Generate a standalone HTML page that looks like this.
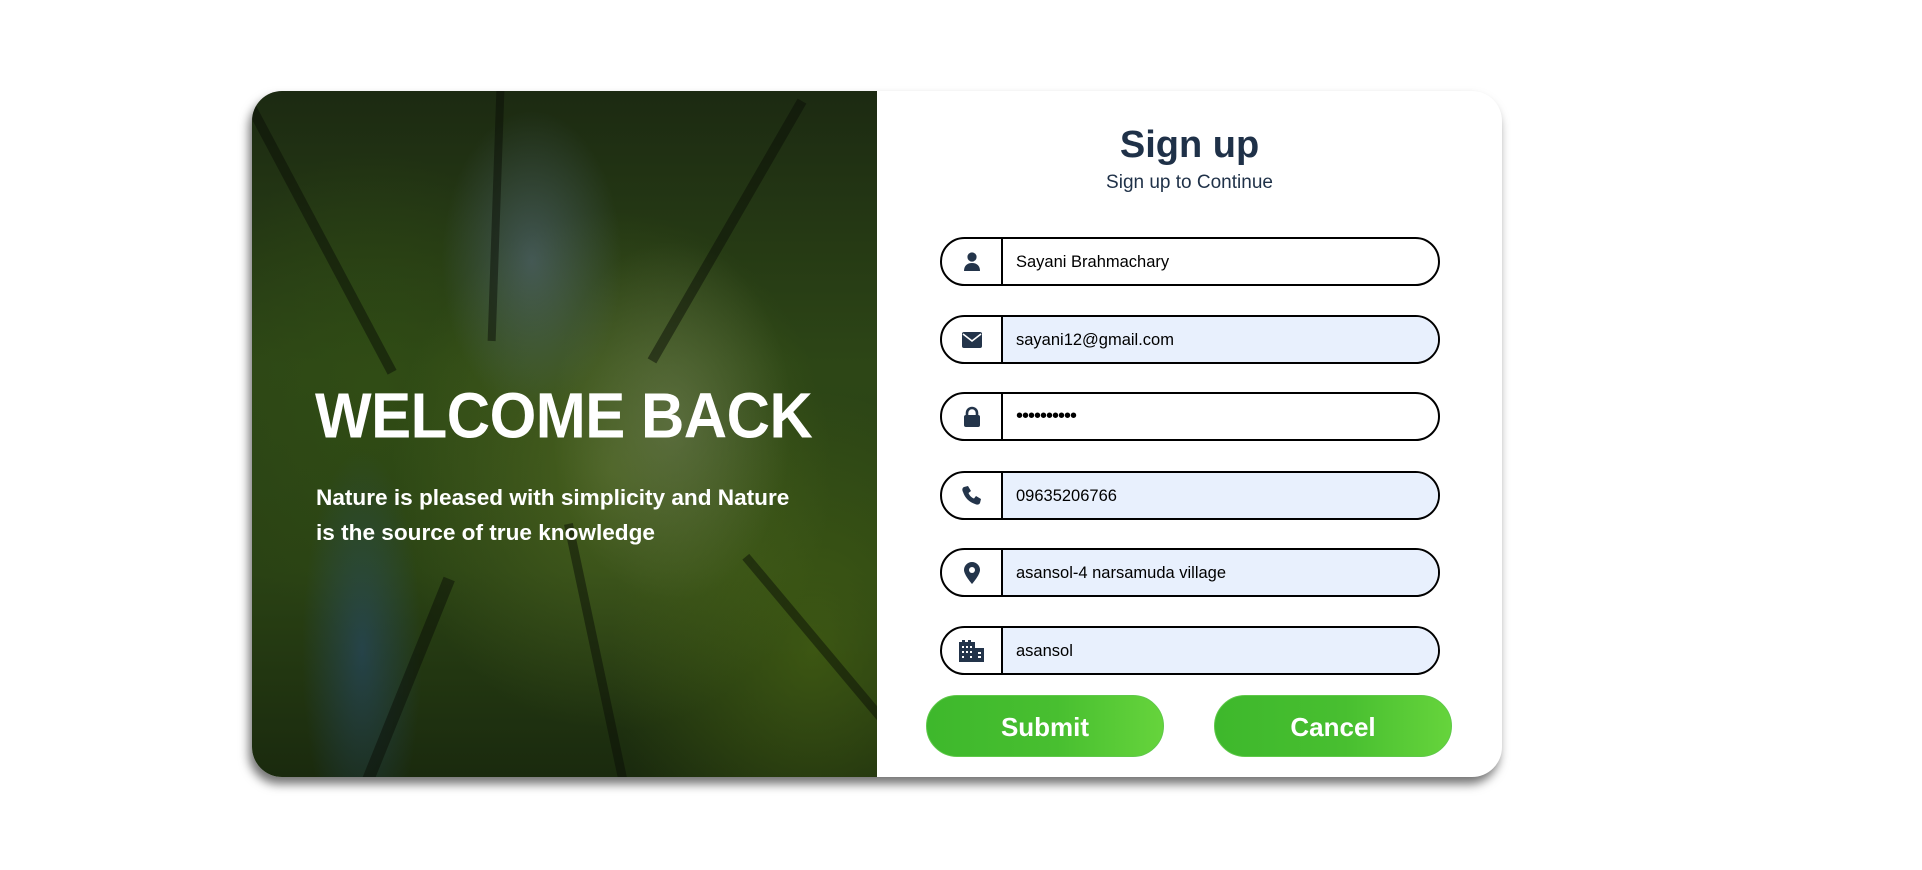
<!DOCTYPE html>
<html><head><meta charset="utf-8"><style>
*{margin:0;padding:0;box-sizing:border-box}
body{width:1922px;height:870px;background:#fff;font-family:"Liberation Sans",sans-serif;position:relative;overflow:hidden}
.card{position:absolute;left:252px;top:91px;width:1250px;height:686px;border-radius:30px;box-shadow:-3px 7px 10px rgba(0,0,0,.55);background:#fff}
.left{position:absolute;left:0;top:0;width:625px;height:686px;border-radius:30px 0 0 30px;overflow:hidden;
background:
radial-gradient(ellipse 60px 200px at 110px 560px,rgba(40,80,140,.45),transparent),
radial-gradient(ellipse 90px 150px at 280px 170px,rgba(100,120,160,.45),transparent),
radial-gradient(ellipse 120px 180px at 420px 330px,rgba(130,140,110,.4),transparent),
radial-gradient(ellipse 220px 260px at 360px 380px,rgba(100,125,40,.5),transparent),
radial-gradient(ellipse 200px 260px at 560px 560px,rgba(80,110,20,.55),transparent),
radial-gradient(ellipse 180px 240px at 120px 300px,rgba(50,80,20,.6),transparent),
linear-gradient(180deg,#1c2a12 0%,#2d4616 40%,#2a4214 70%,#1a2a0e 100%)}
.trunk{position:absolute;background:rgba(10,14,6,.5);width:10px}
.w{position:absolute;left:63px;top:290px;color:#fff;font-weight:bold;font-size:60px;letter-spacing:-0.5px;transform:scaleY(1.07)}
.p{position:absolute;left:64px;top:389px;color:#fff;font-weight:bold;font-size:22.6px;line-height:35px;white-space:nowrap}
.t{position:absolute;left:625px;width:625px;text-align:center;color:#1f3148}
.field{position:absolute;left:688px;width:500px;height:49px;border:2px solid #000;border-radius:25px;overflow:hidden;background:#fff}
.field .ic{position:absolute;left:0;top:0;width:61px;height:45px;border-right:2px solid #000;display:flex;align-items:center;justify-content:center}
.field .v{position:absolute;left:61px;right:0;top:0;height:45px;padding-left:13px;line-height:47px;font-size:16.5px;color:#000}
.blue .v{background:#e8f0fd}
.btn{position:absolute;top:604px;width:238px;height:62px;border-radius:31px;background:linear-gradient(90deg,#3eb82c 0%,#48bf30 55%,#66d43c 100%);border:1px solid #5fc94a;color:#fff;font-weight:bold;font-size:26px;text-align:center;line-height:62px}
</style></head><body>
<div class="card">
 <div class="left">
  <div class="trunk" style="left:60px;top:-20px;height:320px;transform:rotate(-28deg)"></div>
  <div class="trunk" style="left:240px;top:0;height:250px;width:8px;transform:rotate(2deg)"></div>
  <div class="trunk" style="left:470px;top:-10px;height:300px;transform:rotate(30deg)"></div>
  <div class="trunk" style="left:150px;top:480px;height:220px;width:12px;transform:rotate(22deg)"></div>
  <div class="trunk" style="left:340px;top:430px;height:270px;width:9px;transform:rotate(-12deg)"></div>
  <div class="trunk" style="left:560px;top:440px;height:220px;width:9px;transform:rotate(-40deg)"></div>
  <div class="w">WELCOME BACK</div>
  <div class="p">Nature is pleased with simplicity and Nature<br>is the source of true knowledge</div>
 </div>
 <div class="t" style="top:33px;font-size:38px;font-weight:bold">Sign up</div>
 <div class="t" style="top:81px;font-size:19px">Sign up to Continue</div>

 <div class="field" style="top:146px"><div class="ic"><svg width="18" height="20" viewBox="0 0 18 20"><circle cx="9" cy="5" r="4.6" fill="#23344a"/><path d="M1 19c0-5 3-8 8-8s8 3 8 8z" fill="#23344a"/></svg></div><div class="v">Sayani Brahmachary</div></div>
 <div class="field blue" style="top:224px"><div class="ic"><svg width="20" height="16" viewBox="0 0 20 16"><rect x="0" y="0" width="20" height="16" rx="2" fill="#23344a"/><path d="M1 2l9 7 9-7" stroke="#fff" stroke-width="1.6" fill="none"/></svg></div><div class="v">sayani12@gmail.com</div></div>
 <div class="field" style="top:301px"><div class="ic"><svg width="18" height="22" viewBox="0 0 18 22"><path d="M4 10V7a5 5 0 0110 0v3" stroke="#23344a" stroke-width="2.6" fill="none"/><rect x="1" y="9" width="16" height="12" rx="2" fill="#23344a"/></svg></div><div class="v" style="font-size:20px;letter-spacing:-1px;line-height:44px">••••••••••</div></div>
 <div class="field blue" style="top:380px"><div class="ic"><svg width="20" height="20" viewBox="0 0 20 20"><path d="M2 1l4-1 3 5-2.5 2c1 2.5 3 4.5 5.5 5.5L14 10l5 3-1 4c-1 2-3 2-5 1C7 16 3 12 1 6 0 4 0 2 2 1z" fill="#23344a"/></svg></div><div class="v">09635206766</div></div>
 <div class="field blue" style="top:457px"><div class="ic"><svg width="16" height="22" viewBox="0 0 16 22"><path d="M8 0a8 8 0 018 8c0 5-8 14-8 14S0 13 0 8a8 8 0 018-8z" fill="#23344a"/><circle cx="8" cy="8" r="3" fill="#fff"/></svg></div><div class="v">asansol-4 narsamuda village</div></div>
 <div class="field blue" style="top:535px"><div class="ic"><svg width="26" height="22" viewBox="0 0 26 22"><rect x="0" y="2" width="16" height="20" fill="#23344a"/><rect x="3" y="0" width="3" height="3" fill="#23344a"/><rect x="9" y="0" width="3" height="3" fill="#23344a"/><rect x="16" y="8" width="9" height="14" fill="#23344a"/><g fill="#fff"><rect x="3" y="6" width="2" height="2"/><rect x="7" y="6" width="2" height="2"/><rect x="11" y="6" width="2" height="2"/><rect x="3" y="11" width="2" height="2"/><rect x="7" y="11" width="2" height="2"/><rect x="11" y="11" width="2" height="2"/><rect x="3" y="16" width="2" height="2"/><rect x="11" y="16" width="2" height="2"/><rect x="19" y="12" width="3" height="2"/><rect x="19" y="16" width="3" height="2"/></g></svg></div><div class="v">asansol</div></div>

 <div class="btn" style="left:674px">Submit</div>
 <div class="btn" style="left:962px">Cancel</div>
</div>
</body></html>
